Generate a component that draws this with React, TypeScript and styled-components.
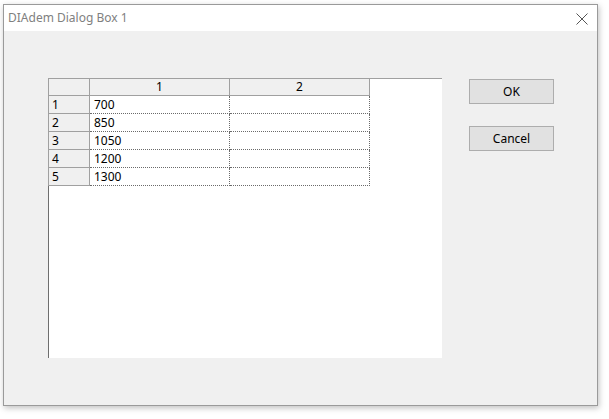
import React from "react";
import styled, { createGlobalStyle } from "styled-components";

const GlobalStyle = createGlobalStyle`
  html, body {
    margin: 0;
    padding: 0;
    background: #ffffff;
  }
  body {
    font-family: "Noto Sans", "Open Sans", sans-serif;
    font-size: 12px;
  }
`;

const Page = styled.div`
  width: 609px;
  height: 419px;
  padding: 4px 0 0 3px;
  box-sizing: border-box;
`;

const Window = styled.div`
  width: 595px;
  height: 402px;
  box-sizing: border-box;
  border: 1px solid #9a9a9a;
  background: #f0f0f0;
  box-shadow: 1px 2px 6px rgba(0, 0, 0, 0.25);
  display: flex;
  flex-direction: column;
`;

const TitleBar = styled.div`
  height: 26px;
  background: #ffffff;
  display: flex;
  align-items: center;
  justify-content: space-between;
  padding: 0 8px 0 4px;
  flex-shrink: 0;
`;

const Title = styled.span`
  color: #808080;
  font-size: 12px;
  margin-top: -1px;
`;

const CloseButton = styled.div`
  width: 14px;
  height: 14px;
  display: flex;
  align-items: center;
  justify-content: center;
  margin-top: 1px;
`;

const Body = styled.div`
  flex: 1;
  display: flex;
  align-items: flex-start;
  gap: 27px;
  padding: 47px 0 0 44px;
`;

const GridBox = styled.div`
  width: 394px;
  height: 280px;
  box-sizing: border-box;
  background: #ffffff;
  border-left: 1px solid #6e6e6e;
  border-top: 1px solid #a0a0a0;
`;

const Grid = styled.table`
  border-collapse: collapse;
  table-layout: fixed;
  margin-top: -1px;
  margin-left: -1px;
`;

const HeadCell = styled.th`
  background: #f0f0f0;
  border: 1px solid #a0a0a0;
  height: 16px;
  padding: 0;
  font-weight: normal;
  text-align: center;
  color: #000;
  line-height: 14px;
`;

const RowHead = styled.td`
  background: #f0f0f0;
  border: 1px solid #a0a0a0;
  height: 17px;
  padding: 0 0 0 3px;
  color: #000;
  line-height: 14px;
`;

const Cell = styled.td`
  border: 1px dotted #6a6a6a;
  height: 17px;
  padding: 0 0 0 4px;
  color: #000;
  line-height: 14px;
`;

const Buttons = styled.div`
  display: flex;
  flex-direction: column;
  gap: 22px;
  padding-top: 1px;
`;

const Button = styled.button`
  width: 85px;
  height: 25px;
  background: #e1e1e1;
  border: 1px solid #adadad;
  font-family: "Noto Sans", "Open Sans", sans-serif;
  font-size: 12px;
  color: #000;
  padding: 0;
`;

const rows = [
  ["1", "700", ""],
  ["2", "850", ""],
  ["3", "1050", ""],
  ["4", "1200", ""],
  ["5", "1300", ""],
];

export default function App() {
  return (
    <>
      <GlobalStyle />
      <Page>
        <Window>
          <TitleBar>
            <Title>DIAdem Dialog Box 1</Title>
            <CloseButton>
              <svg width="12" height="12" viewBox="0 0 12 12">
                <path d="M0.5 0.5 L11.5 11.5 M11.5 0.5 L0.5 11.5" stroke="#555" strokeWidth="1" fill="none" />
              </svg>
            </CloseButton>
          </TitleBar>
          <Body>
            <GridBox>
              <Grid>
                <colgroup>
                  <col style={{ width: 41 }} />
                  <col style={{ width: 140 }} />
                  <col style={{ width: 140 }} />
                </colgroup>
                <thead>
                  <tr>
                    <HeadCell />
                    <HeadCell>1</HeadCell>
                    <HeadCell>2</HeadCell>
                  </tr>
                </thead>
                <tbody>
                  {rows.map((row) => (
                    <tr key={row[0]}>
                      <RowHead>{row[0]}</RowHead>
                      <Cell>{row[1]}</Cell>
                      <Cell>{row[2]}</Cell>
                    </tr>
                  ))}
                </tbody>
              </Grid>
            </GridBox>
            <Buttons>
              <Button>OK</Button>
              <Button>Cancel</Button>
            </Buttons>
          </Body>
        </Window>
      </Page>
    </>
  );
}
